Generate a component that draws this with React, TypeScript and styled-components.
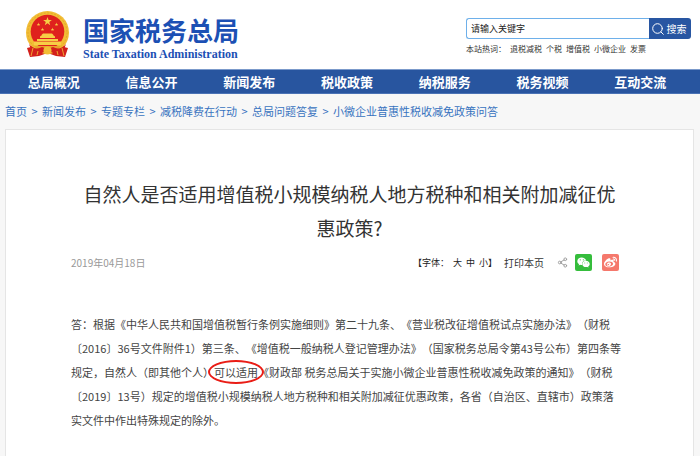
import React from "react";
import styled, { createGlobalStyle } from "styled-components";
import { Share2 } from "lucide-react";
import { FaWeixin, FaWeibo } from "react-icons/fa";

const GlobalStyle = createGlobalStyle`
  * { box-sizing: border-box; }
  body {
    margin: 0;
    background: #f7f7f7;
    color: #333;
    font-family: "Noto Sans CJK SC", sans-serif;
    font-size: 11px;
    text-spacing-trim: space-all;
  }
  a { color: inherit; text-decoration: none; }
  button, input { font-family: inherit; }
`;

const Header = styled.header`
  display: flex;
  justify-content: space-between;
  align-items: flex-start;
  height: 69px;
  padding: 0 9px 0 25px;
  background: #fff;
`;

const Brand = styled.a`
  display: flex;
  align-items: flex-start;
  gap: 13px;
  padding-top: 10px;
`;

const BrandText = styled.span`
  display: flex;
  flex-direction: column;
  padding-top: 2px;
  color: #1c50b4;
`;

const BrandName = styled.span`
  font-size: 26px;
  font-weight: 700;
  line-height: 36px;
`;

const BrandLatin = styled.span`
  font-family: "Liberation Serif", serif;
  font-size: 12px;
  font-weight: 700;
  line-height: 12px;
`;

const SearchArea = styled.div`
  width: 225px;
  padding-top: 18px;
`;

const SearchForm = styled.form`
  display: flex;
  height: 21px;
`;

const SearchInput = styled.input`
  flex: 1;
  min-width: 0;
  padding: 0 4px;
  border: 1px solid #6eb0ea;
  border-right: 0;
  border-radius: 3px 0 0 3px;
  background: #fff;
  font-size: 9px;
  outline: none;
  &::placeholder { color: #222; opacity: 1; }
`;

const SearchButton = styled.button`
  display: flex;
  align-items: center;
  justify-content: center;
  gap: 3px;
  width: 42px;
  padding: 0 2px 0 0;
  border: 0;
  border-radius: 0 3px 3px 0;
  background: #2856a2;
  color: #fff;
  font-size: 10px;
`;

const HotWords = styled.div`
  display: flex;
  gap: 4px;
  margin-top: 4px;
  font-size: 8px;
  line-height: 12px;
  white-space: nowrap;
`;

const Nav = styled.nav`
  display: grid;
  grid-template-columns: repeat(7, 1fr);
  padding: 0 11px 0 5px;
  border-top: 1px solid #7b9acb;
  border-bottom: 1px solid #4a72b5;
  background: #28559f;
`;

const NavLink = styled.a`
  color: #fff;
  font-size: 13px;
  font-weight: 700;
  line-height: 23px;
  text-align: center;
`;

const Breadcrumb = styled.nav`
  display: flex;
  gap: 4px;
  padding: 9px 5px;
  color: #3873bf;
  line-height: 17px;
  white-space: nowrap;
`;

const Separator = styled.span`
  width: 7px;
  text-align: center;
`;

const Article = styled.article`
  min-height: 327px;
  margin: 0 6px 0 5px;
  padding: 47px 65px 20px;
  border: 1px solid #e5e5e5;
  border-bottom: 0;
  background: #fff;
`;

const Title = styled.h1`
  margin: 0;
  padding: 0 8px;
  font-size: 19px;
  font-weight: 400;
  line-height: 34px;
  text-align: center;
`;

const Meta = styled.div`
  display: flex;
  align-items: center;
  height: 18px;
  margin-top: 8px;
  padding-right: 9px;
  font-size: 10px;
`;

const PublishDate = styled.time`
  margin-right: auto;
  color: #999;
`;

const FontSize = styled.span`
  display: flex;
  gap: 4px;
  margin-right: 7px;
  color: #222;
  font-size: 9px;
`;

const TextButton = styled.button`
  padding: 0;
  border: 0;
  background: none;
  color: inherit;
  font-size: inherit;
`;

const ShareGroup = styled.div`
  display: flex;
  align-items: center;
  margin-left: 13px;
  color: #999;
`;

const ShareButton = styled.button<{ $color: string; $gap: number }>`
  display: flex;
  align-items: center;
  justify-content: center;
  width: 17px;
  height: 17px;
  margin-left: ${(p) => p.$gap}px;
  padding: 0;
  border: 0;
  border-radius: 2px;
  background: ${(p) => p.$color};
  color: #fff;
`;

const Body = styled.p`
  margin: 41px 0 0;
  padding-right: 4px;
  line-height: 24px;
  color: #444;
`;

const Circled = styled.span`
  position: relative;
  &::after {
    content: "";
    position: absolute;
    inset: -4px -6px;
    border: 2px solid #e91d16;
    border-radius: 50%;
  }
`;

const star = (cx: number, cy: number, r: number) =>
  Array.from({ length: 10 }, (_, i) => {
    const a = (Math.PI * i) / 5 - Math.PI / 2;
    const d = i % 2 ? r * 0.4 : r;
    return `${cx + d * Math.cos(a)},${cy + d * Math.sin(a)}`;
  }).join(" ");

const Emblem = () => (
  <svg width="45" height="49" viewBox="0 0 45 49" aria-hidden="true">
    <path d="M6 34 L39 34 L39 37 L43 38 L40 47 L31 46 L22.5 43 L14 46 L5 47 L2 38 L6 37Z" fill="#d3201c" />
    <circle cx="22.5" cy="22.5" r="21.5" fill="#f2bd35" />
    <circle cx="22.5" cy="22.5" r="19.5" fill="none" stroke="#e3a82a" strokeWidth="1" strokeDasharray="2 1.5" />
    <circle cx="22.5" cy="21.5" r="16.8" fill="#df211d" />
    <g fill="#f7ce45">
      <polygon points={star(22.5, 11.5, 4.6)} />
      <polygon points={star(13.5, 14.5, 1.9)} />
      <polygon points={star(31.5, 14.5, 1.9)} />
      <polygon points={star(17.5, 19.5, 1.9)} />
      <polygon points={star(27.5, 19.5, 1.9)} />
      <path d="M16.5 25 L18 23.5 H27 L28.5 25Z M15 26.5 L17 25 H28 L30 26.5 V28 H15Z M12 29 H33 V31 H12Z M9 31.5 H36 V35 H9Z" />
    </g>
    <path d="M9 36 H36 L31 40 H14Z" fill="#e8a52b" />
    <path d="M4 34 Q10 41 17 37 L22.5 39 L28 37 Q35 41 41 34 L38 42 Q31 45 26 42 L22.5 44 L19 42 Q14 45 7 42Z" fill="#d3201c" />
    <circle cx="22.5" cy="40.5" r="4" fill="#f2bd35" />
    <path d="M8 38 L6 46 M37 38 L39 46 M13 41 L12 45 M32 41 L33 45" stroke="#f0a630" strokeWidth="1" />
  </svg>
);

const SearchIcon = () => (
  <svg width="12" height="12" viewBox="0 0 12 12" fill="none" stroke="currentColor" strokeLinecap="round" aria-hidden="true">
    <circle cx="5.5" cy="5.5" r="4.8" />
    <path d="M9 9 L11.3 11.3" />
  </svg>
);

const hotWords = ["退税减税", "个税", "增值税", "小微企业", "发票"];
const navItems = ["总局概况", "信息公开", "新闻发布", "税收政策", "纳税服务", "税务视频", "互动交流"];
const crumbs = ["首页", "新闻发布", "专题专栏", "减税降费在行动", "总局问题答复", "小微企业普惠性税收减免政策问答"];

export default function App() {
  return (
    <>
      <GlobalStyle />
      <Header>
        <Brand href="#">
          <Emblem />
          <BrandText>
            <BrandName>国家税务总局</BrandName>
            <BrandLatin>State Taxation Administration</BrandLatin>
          </BrandText>
        </Brand>
        <SearchArea>
          <SearchForm role="search" onSubmit={(e) => e.preventDefault()}>
            <SearchInput type="text" aria-label="请输入关键字" placeholder="请输入关键字" />
            <SearchButton type="submit"><SearchIcon />搜索</SearchButton>
          </SearchForm>
          <HotWords>
            <span>本站热词：</span>
            {hotWords.map((word) => <a href="#" key={word}>{word}</a>)}
          </HotWords>
        </SearchArea>
      </Header>
      <Nav aria-label="主导航">
        {navItems.map((item) => <NavLink href="#" key={item}>{item}</NavLink>)}
      </Nav>
      <Breadcrumb aria-label="当前位置">
        {crumbs.map((crumb, i) => (
          <React.Fragment key={crumb}>
            {i > 0 && <Separator>&gt;</Separator>}
            <a href="#">{crumb}</a>
          </React.Fragment>
        ))}
      </Breadcrumb>
      <Article>
        <Title>自然人是否适用增值税小规模纳税人地方税种和相关附加减征优惠政策?</Title>
        <Meta>
          <PublishDate dateTime="2019-04-18">2019年04月18日</PublishDate>
          <FontSize>
            <span>【字体：</span>
            <TextButton type="button">大</TextButton>
            <TextButton type="button">中</TextButton>
            <span><TextButton type="button">小</TextButton>】</span>
          </FontSize>
          <TextButton type="button">打印本页</TextButton>
          <ShareGroup>
            <Share2 size={11} strokeWidth={2} />
            <ShareButton type="button" aria-label="微信" $color="#35bd3c" $gap={7}><FaWeixin size={13} /></ShareButton>
            <ShareButton type="button" aria-label="微博" $color="#f5786c" $gap={10}><FaWeibo size={13} /></ShareButton>
          </ShareGroup>
        </Meta>
        <Body>
          答：根据《中华人民共和国增值税暂行条例实施细则》第二十九条、《营业税改征增值税试点实施办法》（财税〔2016〕36号文件附件1）第三条、《增值税一般纳税人登记管理办法》（国家税务总局令第43号公布）第四条等规定，自然人（即其他个人）<Circled>可以适用</Circled>《财政部 税务总局关于实施小微企业普惠性税收减免政策的通知》（财税〔2019〕13号）规定的增值税小规模纳税人地方税种和相关附加减征优惠政策，各省（自治区、直辖市）政策落实文件中作出特殊规定的除外。
        </Body>
      </Article>
    </>
  );
}
